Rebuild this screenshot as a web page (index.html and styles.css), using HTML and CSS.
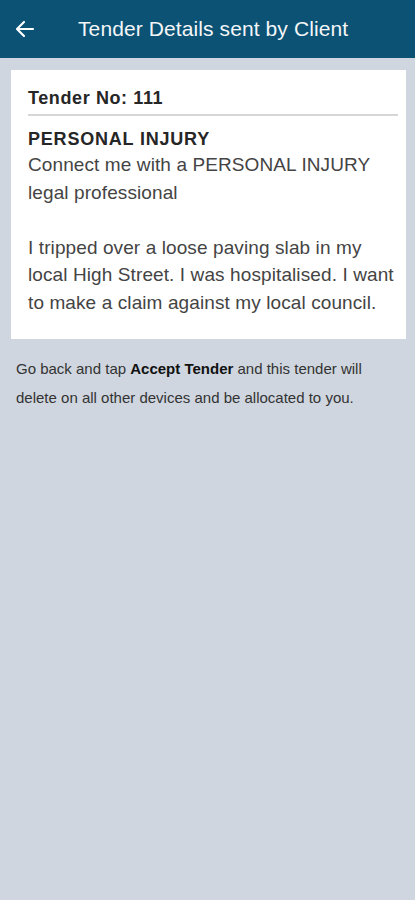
FILE: index.html
```html
<!DOCTYPE html>
<html lang="en">
<head>
  <meta charset="UTF-8" />
  <meta name="viewport" content="width=device-width, initial-scale=1.0"/>
  <title>Tender Details</title>
  <link rel="stylesheet" href="styles.css">
</head>
<body>
  <!-- Top bar -->
  <div class="topbar">
    <svg class="back" width="24" height="24" viewBox="0 0 24 24">
      <path d="M20 12H5M11 5l-7 7 7 7" fill="none" stroke="#fff" stroke-width="2.2" stroke-linecap="round" stroke-linejoin="round"/>
    </svg>
    <span class="title">Tender Details sent by Client</span>
  </div>

  <!-- Tender card -->
  <div class="card">
    <div class="tender-no">Tender No: 111</div>
    <div class="category">PERSONAL INJURY</div>
    <p class="body-text">Connect me with a PERSONAL INJURY legal professional</p>
    <p class="body-text gap">I tripped over a loose paving slab in my local High Street. I was hospitalised. I want to make a claim against my local council.</p>
  </div>

  <p class="note">Go back and tap <b>Accept Tender</b> and this tender will delete on all other devices and be allocated to you.</p>
</body>
</html>
```

FILE: styles.css
```css
body {
  margin: 0;
  padding: 0;
  background-color: #cfd6df;
  min-height: 900px;
  font-family: "Liberation Sans", Arial, sans-serif;
}

.topbar {
  height: 58px;
  background-color: #0b5274;
  display: flex;
  align-items: center;
  padding-left: 13px;
  box-sizing: border-box;
}

.back {
  flex: none;
}

.title {
  color: #f4f6f8;
  font-size: 21px;
  letter-spacing: 0.1px;
  margin-left: 41px;
}

.card {
  background-color: #fff;
  margin: 12px 9px 0 11px;
  padding: 18px 8px 23px 17px;
}

.tender-no {
  font-size: 18px;
  line-height: 21px;
  font-weight: bold;
  letter-spacing: 0.6px;
  color: #262626;
  padding-bottom: 5px;
  border-bottom: 2px solid #d6d6d6;
}

.category {
  font-size: 18px;
  line-height: 22px;
  font-weight: bold;
  letter-spacing: 0.8px;
  color: #262626;
  margin-top: 12px;
}

.body-text {
  font-size: 19px;
  line-height: 27.5px;
  letter-spacing: 0.1px;
  color: #444;
  margin: 1px 0 0;
}

.gap {
  margin-top: 27.5px;
}

.note {
  font-size: 15px;
  line-height: 29px;
  color: #333;
  margin: 14.5px 16px;
}

.note b {
  color: #111;
}
```
